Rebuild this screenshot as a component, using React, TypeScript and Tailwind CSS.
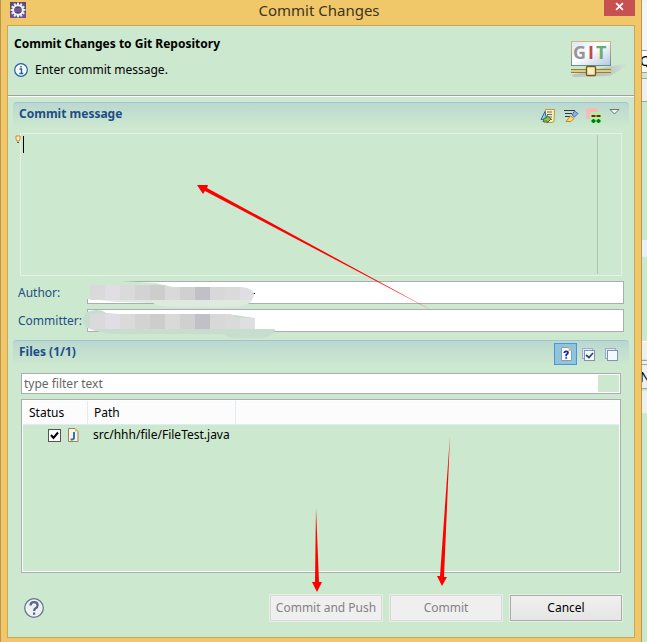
import React from "react";

const bg = "bg-[#cce8cf]";

const teeth = [0, 30, 60, 90, 120, 150, 180, 210, 240, 270, 300, 330];

function EclipseIcon() {
  return (
    <svg viewBox="0 0 16 16" className="size-4" aria-hidden="true">
      <rect width="16" height="16" fill="#5d4a7c" />
      <rect x="0" y="11" width="16" height="5" fill="#6f5199" />
      <g fill="#e9e9ee">
        {teeth.map((angle) => (
          <rect key={angle} x="7" y="0.6" width="2" height="3" transform={`rotate(${angle} 8 8)`} />
        ))}
      </g>
      <circle cx="8" cy="8" r="4.800" fill="#54456f" stroke="#f3f3f5" strokeWidth="2" />
      <path d="M4.500 7h7M4.500 9h7" stroke="#8c83a6" strokeWidth="0.8" />
    </svg>
  );
}

function GitBanner() {
  return (
    <svg viewBox="0 0 62 42" className="h-[42px] w-[62px]" aria-label="GIT" role="img">
      <defs>
        <linearGradient id="plate" x1="0" y1="0" x2="1" y2="1">
          <stop offset="0" stopColor="#dbe5f4" />
          <stop offset="0.45" stopColor="#ffffff" />
          <stop offset="1" stopColor="#b4c6df" />
        </linearGradient>
        <linearGradient id="edge" x1="0" y1="0" x2="0" y2="1">
          <stop offset="0" stopColor="#e0b080" />
          <stop offset="1" stopColor="#6c8c94" />
        </linearGradient>
        <linearGradient id="shade" x1="0" y1="0" x2="1" y2="0">
          <stop offset="0" stopColor="#b5b5bd" />
          <stop offset="0.6" stopColor="#b9b3bf" />
          <stop offset="1" stopColor="#cce8cf" />
        </linearGradient>
      </defs>
      <path d="M3 36 L44 27 L60 25 Q52 32 42 37 L6 38Z" fill="url(#shade)" opacity="0.7" />
      <rect x="3.500" y="2.500" width="39" height="24" fill="url(#plate)" stroke="url(#edge)" />
      <text x="5" y="20" fontSize="18" fontWeight="700" fontFamily="Open Sans, sans-serif" fill="#969696">G</text>
      <text x="20" y="20" fontSize="18" fontWeight="700" fontFamily="Open Sans, sans-serif" fill="#bd4b50">I</text>
      <text x="28" y="20" fontSize="18" fontWeight="700" fontFamily="Open Sans, sans-serif" fill="#67ad71">T</text>
      <path d="M3 32h40" stroke="#928230" strokeWidth="4" />
      <path d="M3 32h40" stroke="#f3e7a6" strokeWidth="1.400" />
      <rect x="18.500" y="27.500" width="9" height="9" rx="1" fill="#fbedc0" stroke="#755d18" strokeWidth="1.400" />
    </svg>
  );
}

function AmendIcon() {
  return (
    <svg viewBox="0 0 16 16" className="size-4" aria-hidden="true">
      <path d="M5.500 1.500h9l-.5 12-2 1h-8z" fill="#fff0b0" stroke="#b79a45" />
      <path d="M7 4h5M7 6.500h5M7 9h5M8 11.500h4" stroke="#5c6680" />
      <path d="M1 11.500 5 3.500 6.500 11Z" fill="#9fc7e6" stroke="#2d659e" />
      <path d="M3 13.500q0-4 4-4v-2l4 3.500-4 4v-2q-2 0-4 .5z" fill="#8dc260" stroke="#39752b" />
    </svg>
  );
}

function SignedOffIcon() {
  return (
    <svg viewBox="0 0 16 16" className="size-4" aria-hidden="true">
      <path d="M1 2.500h11M2 5.500h7M2 8.500h6" stroke="#333b3b" strokeWidth="1.200" />
      <path d="M9 7 11.500 3 15 5.500 11.500 9Z" fill="#8eb0e4" stroke="#486eb4" />
      <path d="M7.500 8 11 10.500 8 13.500H3Z" fill="#ffdb68" stroke="#c58a28" />
    </svg>
  );
}

function ChangeIdIcon() {
  return (
    <svg viewBox="0 0 16 16" className="size-4" aria-hidden="true">
      <rect x="0" y="0" width="12" height="11" rx="2" fill="#f9b9b9" />
      <rect x="4" y="4" width="12" height="12" rx="2" fill="#a9f5a7" />
      <path d="M5.500 8h4M10.500 8h4" stroke="#a70e13" strokeWidth="2" />
      <path d="M5.500 13h4M10.500 13h4M7.500 11v4M12.500 11v4" stroke="#057612" strokeWidth="2" />
    </svg>
  );
}

function UntrackedIcon() {
  return (
    <svg viewBox="0 0 16 16" className="size-4" aria-hidden="true">
      <path d="M3.500 1.500h7l3 3v10h-10z" fill="#f8fbff" stroke="#8d9cb4" />
      <path d="M10.500 1v4h3.500z" fill="#e3bc6d" />
      <path d="M6.300 7q0-1.700 1.900-1.700 1.800 0 1.800 1.500 0 1-1.800 2v1.400M8.200 11.200v1.500" fill="none" stroke="#112c92" strokeWidth="1.700" />
    </svg>
  );
}

function BoxesIcon({ checked = false }: { checked?: boolean }) {
  return (
    <svg viewBox="0 0 16 16" className="size-4" aria-hidden="true">
      <rect x="1.500" y="2.500" width="10" height="10" fill="#d9eafa" stroke="#9aaed0" />
      <rect x="3.500" y="4.500" width="10" height="10" fill="#f3f9ff" stroke="#8493ad" />
      {checked && <path d="M5 9 8 11.500 12 7" fill="none" stroke="#34475f" strokeWidth="1.700" />}
    </svg>
  );
}

function JavaIcon() {
  return (
    <svg viewBox="0 0 12 14" className="h-[14px] w-3" aria-hidden="true">
      <path d="M1.500 .5h6.500l3 3v10h-9.500z" fill="#eef5fb" stroke="#a98237" />
      <path d="M8 .5v3h3z" fill="#e5bd68" />
      <path d="M7 4v5.500q0 2-2 2h-1.500" fill="none" stroke="#3e72a6" strokeWidth="2" />
    </svg>
  );
}

function SectionHeader({ title, children }: { title: string; children: React.ReactNode }) {
  return (
    <div className="mx-[5px] flex h-[25px] items-start justify-between rounded-t border-t border-[#a3c1d0] bg-linear-to-b from-[#bbd8d0] to-[#cce8cf] pr-[9px] pl-[6px]">
      <h2 className="text-[12px] leading-[22px] font-bold text-[#1f4e86]">{title}</h2>
      {children}
    </div>
  );
}

function Person({ label, id, children }: { label: string; id: string; children: React.ReactNode }) {
  return (
    <div className="flex h-[23px] items-center pr-[10px] pl-[10px]">
      <label htmlFor={id} className="w-[69px] shrink-0 text-[12px] text-[#1f4e86]">{label}</label>
      <div className="relative h-full flex-1">
        <input id={id} className="block h-full w-full border border-[#abadb3] bg-white px-1 text-[12px] outline-none" />
        {children}
      </div>
    </div>
  );
}

const mosaic = ["#dadadc", "#e0dee4", "#dadada", "#d3d3d3", "#cdcdcb", "#d9d9d9", "#d0d0d0", "#c0c0c6", "#d8d8d9", "#dadada", "#dfdfe3"];

function Smudge({ second = false }: { second?: boolean }) {
  const clip = second ? "lower-smudge" : "upper-smudge";
  return (
    <svg viewBox="0 0 200 34" className="pointer-events-none absolute -top-1 -left-1 h-[34px] w-[200px]" aria-hidden="true">
      <clipPath id={clip}>
        {second ? <path d="M7 9H144Q151 9 153 13H172V24H7Z" /> : <path d="M7 8H81L90 10H158Q170 11 171 17 170 21 167 23H7Z" />}
      </clipPath>
      {second ? (
        <path d="M0 14Q1 7 7 6 17 3 23 8L36 9H145L172 13V24H192Q191 32 177 33H153Q145 33 141 29H34Q16 28 7 24Q0 22 0 14Z" fill="#c7decf" />
      ) : (
        <>
          <path d="M0 4Q12 0 24 4H38L73 6 84 9H7V22H0Z" fill="#cce8cf" />
          <path d="M8 22H160L171 17Q170 30 150 30H90Q76 30 70 26L34 25Z" fill="#dfe9e0" />
          <path d="M170 16h2v1h-2z" fill="#000000" />
        </>
      )}
      <g clipPath={`url(#${clip})`}>
        {mosaic.map((fill, i) => (
          <rect key={i} x={7 + i * 15} y="6" width="15" height={second ? 18 : 17} fill={fill} />
        ))}
      </g>
    </svg>
  );
}

function Arrows() {
  return (
    <svg viewBox="0 0 647 642" className="pointer-events-none absolute top-0 left-0 h-[642px] w-[647px]" aria-hidden="true">
      <g fill="#ff0000">
        <path d="M433 311 205 191 203 194 197 185 208 185 207 188Z" />
        <path d="M316 508 315 582 312 582 317 592 322 582 319 582Z" />
        <path d="M450 436 440 576 437 576 442 586 447 577 444 577Z" />
      </g>
    </svg>
  );
}

function WindowBehind() {
  return (
    <aside aria-label="Window behind" className={`flex w-[5px] shrink-0 flex-col overflow-hidden ${bg}`}>
      <div className="h-[50px] border-t-2 border-[#f3f3f3] bg-[#f5f5f5]" />
      <div className="h-[23px] border-y border-[#a0a0a0] bg-white text-[14px] leading-5">
        <span className="-ml-[2px] block">Q</span>
      </div>
      <div className="mt-[5px] h-6 border-y border-[#a0a0a0] bg-[#f0f0f0]" />
      <div className="mt-[138px] h-[17px] bg-[#e6f1fc]" />
      <div className="mt-[84px] h-[18px] border-t border-white bg-[#f0f0f0]" />
      <div className="mt-px h-[5px] border-y border-[#a0a0a0] bg-[#f0f0f0]" />
      <div className="h-6 border-b border-[#a0a0a0] bg-[#f0f0f0] text-[14px] leading-6">
        <span className="-ml-[2px] block">N</span>
      </div>
      <div className="mt-[2px] h-[22px] bg-[#f0f0f0]" />
    </aside>
  );
}

export default function App() {
  return (
    <div className={`relative flex min-h-screen font-['Noto_Sans','Open_Sans',sans-serif] text-[12px] text-black ${bg}`}>
      <main className="flex flex-1 flex-col border-x border-x-[#b89754] bg-[#f0c869] px-[6px] pb-1">
        <header className="flex h-[25px] items-start justify-between pl-[3px]">
          <div className="w-6 pt-[2px]"><EclipseIcon /></div>
          <h1 className="text-[15px] leading-[21px] text-[#3d3520]">Commit Changes</h1>
          <button aria-label="Close" className="flex h-4 w-[31px] items-start justify-center bg-[#c75050] pt-[2px] text-white">
            <svg viewBox="0 0 8 8" className="size-[9px]" aria-hidden="true"><path d="m1 1 6 6M7 1 1 7" stroke="white" strokeWidth="1.600" /></svg>
          </button>
        </header>
        <div className={`flex flex-1 flex-col border border-[#cda556] ${bg}`}>
          <div className="flex h-[71px] items-start justify-between border-b border-white pr-1 pl-[6px] shadow-[inset_0_-1px_#a0a0a0]">
            <div className="pt-[9px]">
              <h2 className="text-[12px] leading-[18px] font-bold">Commit Changes to Git Repository</h2>
              <p className="mt-2 flex items-center gap-[7px] text-[12px] leading-[18px]">
                <svg viewBox="0 0 14 14" className="size-[14px]" aria-hidden="true">
                  <circle cx="7" cy="7" r="6.300" fill="#f7fbff" stroke="#285f9a" strokeWidth="1.200" />
                  <path d="M5.500 6h2v4.500M5.300 10.500h4M7 3v1.600" fill="none" stroke="#285f9a" strokeWidth="1.400" />
                </svg>
                Enter commit message.
              </p>
            </div>
            <div className="pt-[13px]"><GitBanner /></div>
          </div>
          <div className="pt-[5px]">
            <SectionHeader title="Commit message">
              <div className="flex gap-[7px] pt-[5px]">
                <button aria-label="Amend previous commit"><AmendIcon /></button>
                <button aria-label="Add Signed-off-by"><SignedOffIcon /></button>
                <button aria-label="Compute Change-Id"><ChangeIdIcon /></button>
                <button aria-label="View menu" className="self-start pt-px">
                  <svg viewBox="0 0 11 6" className="h-[6px] w-[11px]" aria-hidden="true"><path d="M1 .5h9L5.500 5Z" fill="#eef5e9" stroke="#66746b" /></svg>
                </button>
              </div>
            </SectionHeader>
          </div>
          <div className="relative mt-[6px] mr-3 ml-3 h-[143px] border border-[#e8efe7]">
            <textarea aria-label="Commit message" className="block h-full w-full resize-none bg-transparent px-[2px] outline-none" />
            <div className="absolute top-[2px] left-[2px] h-[17px] w-px bg-black" />
            <div className="absolute top-[1px] right-[23px] bottom-[1px] w-px bg-[#b4c4b5]" />
            <svg viewBox="0 0 6 9" className="absolute top-[1px] -left-[6px] h-[9px] w-[6px]" aria-hidden="true"><path d="M1 1h4v3L4 6H2L1 4Z" fill="#fff3c8" stroke="#d4812c" /><path d="M2 7.500h2" stroke="#5f5360" /></svg>
          </div>
          <div className="mt-[5px] flex flex-col gap-[5px]">
            <Person label="Author:" id="author"><Smudge /></Person>
            <Person label="Committer:" id="committer"><Smudge second /></Person>
          </div>
          <div className="pt-2">
            <SectionHeader title="Files (1/1)">
              <div className="flex items-center gap-[7px] pt-[2px]">
                <button aria-label="Show untracked files" className="flex h-[22px] w-[23px] items-center justify-center border border-[#4897d8] bg-[#8fc4da]"><UntrackedIcon /></button>
                <div className="-ml-[3px] flex gap-[7px]">
                  <button aria-label="Select all"><BoxesIcon checked /></button>
                  <button aria-label="Deselect all"><BoxesIcon /></button>
                </div>
              </div>
            </SectionHeader>
          </div>
          <div className="mt-2 mr-[13px] ml-[13px] flex h-[21px] border border-[#abadb3] bg-white p-px">
            <input aria-label="Filter files" placeholder="type filter text" className="min-w-0 flex-1 px-px text-[12px] outline-none placeholder:text-[#666]" />
            <div className={`w-[21px] ${bg}`} />
          </div>
          <div className="mt-[5px] mr-[13px] ml-[13px] h-[174px] border border-[#abadb3] bg-white p-px">
            <div className={`h-full ${bg}`}>
              <table className="w-full table-fixed border-separate border-spacing-0 text-left text-[12px]">
                <colgroup><col className="w-[65px]" /><col className="w-[148px]" /><col /></colgroup>
                <thead className="bg-[#fcfcfc]">
                  <tr className="h-6">
                    <th className="border-r border-b border-[#dfecf3] py-0 pl-[6px] font-normal">Status</th>
                    <th className="border-r border-b border-[#dfecf3] py-0 pl-[6px] font-normal">Path</th>
                    <th aria-label="Details" className="border-b border-[#dfecf3]" />
                  </tr>
                </thead>
                <tbody>
                  <tr className="h-5">
                    <td className="p-0">
                      <div className="flex items-center gap-[6px] pl-[25px]">
                        <span className="relative flex size-[13px]">
                          <input type="checkbox" defaultChecked aria-label="Include FileTest.java" className="size-[13px] appearance-none border border-[#555] bg-white" />
                          <svg viewBox="0 0 13 13" className="pointer-events-none absolute inset-0" aria-hidden="true"><path d="m3 6 2.500 3L10 3.500" fill="none" stroke="black" strokeWidth="2" /></svg>
                        </span>
                        <JavaIcon />
                      </div>
                    </td>
                    <td colSpan={2} className="py-0 pl-[5px]">src/hhh/file/FileTest.java</td>
                  </tr>
                </tbody>
              </table>
            </div>
          </div>
          <footer className="mt-[22px] flex items-center justify-between pr-3 pb-[14px] pl-4">
            <button aria-label="Help">
              <svg viewBox="0 0 20 20" className="size-5" aria-hidden="true">
                <circle cx="10" cy="10" r="9.300" fill="#f0f0f3" stroke="#66788f" strokeWidth="1.300" />
                <path d="M6.500 7.500q0-3.300 3.600-3.300 3.500 0 3.500 3 0 2-2 3-1.500.8-1.500 2.800M10.100 14.500v2.200" fill="none" stroke="#526789" strokeWidth="2.200" />
              </svg>
            </button>
            <div className="flex gap-2">
              <button disabled className="h-[26px] w-28 border border-[#d9d9d9] bg-[#efefef] text-[12px] text-[#838383] outline outline-[#e6eee6]">Commit and Push</button>
              <button disabled className="h-[26px] w-28 border border-[#d9d9d9] bg-[#efefef] text-[12px] text-[#838383] outline outline-[#e6eee6]">Commit</button>
              <button className="h-[26px] w-28 border border-[#acacac] bg-linear-to-b from-[#f0f0f0] to-[#e5e5e5] text-[12px] outline outline-[#e6eee6]">Cancel</button>
            </div>
          </footer>
        </div>
      </main>
      <WindowBehind />
      <Arrows />
    </div>
  );
}
